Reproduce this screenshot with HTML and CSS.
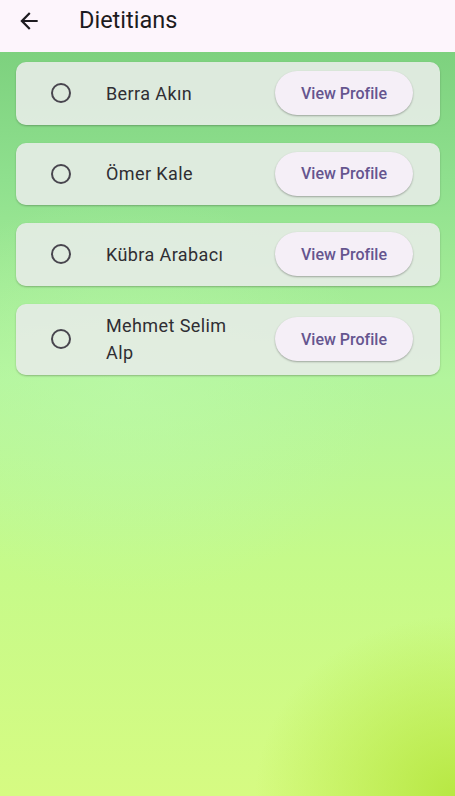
FILE: index.html
```html
<!DOCTYPE html>
<html lang="tr">
<head>
<meta charset="utf-8">
<title>Dietitians</title>
<link rel="stylesheet" href="styles.css">
</head>
<body>
<div class="screen">
  <header class="appbar">
    <button class="back" aria-label="Back">
      <svg width="26" height="26" viewBox="0 0 24 24"><path d="M20 11H7.83l5.59-5.59L12 4l-8 8 8 8 1.41-1.41L7.83 13H20v-2z" fill="#1d1b20"/></svg>
    </button>
    <h1 class="title">Dietitians</h1>
  </header>
  <main class="list">
    <div class="card">
      <span class="radio"></span>
      <span class="name">Berra Akın</span>
      <button class="btn">View Profile</button>
    </div>
    <div class="card">
      <span class="radio"></span>
      <span class="name">Ömer Kale</span>
      <button class="btn">View Profile</button>
    </div>
    <div class="card">
      <span class="radio"></span>
      <span class="name">Kübra Arabacı</span>
      <button class="btn">View Profile</button>
    </div>
    <div class="card">
      <span class="radio"></span>
      <span class="name">Mehmet Selim Alp</span>
      <button class="btn">View Profile</button>
    </div>
  </main>
</div>
</body>
</html>
```
FILE: styles.css
```css
html, body {
  margin: 0;
  padding: 0;
  height: 100%;
}
body {
  font-family: Roboto, "Noto Sans", sans-serif;
}
.screen {
  width: 455px;
  height: 796px;
  display: flex;
  flex-direction: column;
  overflow: hidden;
  background:
    radial-gradient(ellipse 260px 200px at 130px 395px, rgba(190,250,170,0.55), rgba(190,250,170,0) 100%),
    radial-gradient(ellipse 200px 180px at 455px 796px, rgba(180,230,60,0.9), rgba(180,230,60,0) 100%),
    linear-gradient(180deg, #76cb78 0px, #8fe08e 180px, #b3f59d 380px, #c5fa8a 560px, #d6fb82 796px);
}
.appbar {
  height: 52px;
  flex: none;
  background: #fdf5fc;
  display: flex;
  align-items: center;
  padding-left: 16px;
  box-sizing: border-box;
}
.back {
  border: 0;
  background: none;
  padding: 0;
  width: 26px;
  height: 26px;
  margin-top: -11px;
  display: flex;
}
.title {
  margin: -12px 0 0 37px;
  font-size: 23.5px;
  font-weight: 400;
  color: #1d1b20;
}
.list {
  display: flex;
  flex-direction: column;
  gap: 18px;
  padding: 10px 15px 0 16px;
}
.card {
  min-height: 62.5px;
  box-sizing: border-box;
  padding: 8.5px 27px 8.5px 35px;
  display: flex;
  align-items: center;
  background: rgba(228, 236, 228, 0.93);
  border-radius: 10px;
  box-shadow: 0 1px 2px rgba(0,0,0,0.25);
}
.radio {
  width: 16px;
  height: 16px;
  border: 2px solid #48454e;
  border-radius: 50%;
  flex: none;
}
.name {
  margin-left: 35px;
  width: 132px;
  font-size: 18px;
  line-height: 27px;
  letter-spacing: 0.4px;
  color: #2f2e33;
}
.btn {
  margin-left: auto;
  width: 138px;
  height: 44px;
  border: 0;
  border-radius: 22px;
  background: #f5eff7;
  color: #65558f;
  font-family: Roboto, sans-serif;
  font-size: 16px;
  font-weight: 500;
  box-shadow: 0 1px 2px rgba(0,0,0,0.3);
}
```
